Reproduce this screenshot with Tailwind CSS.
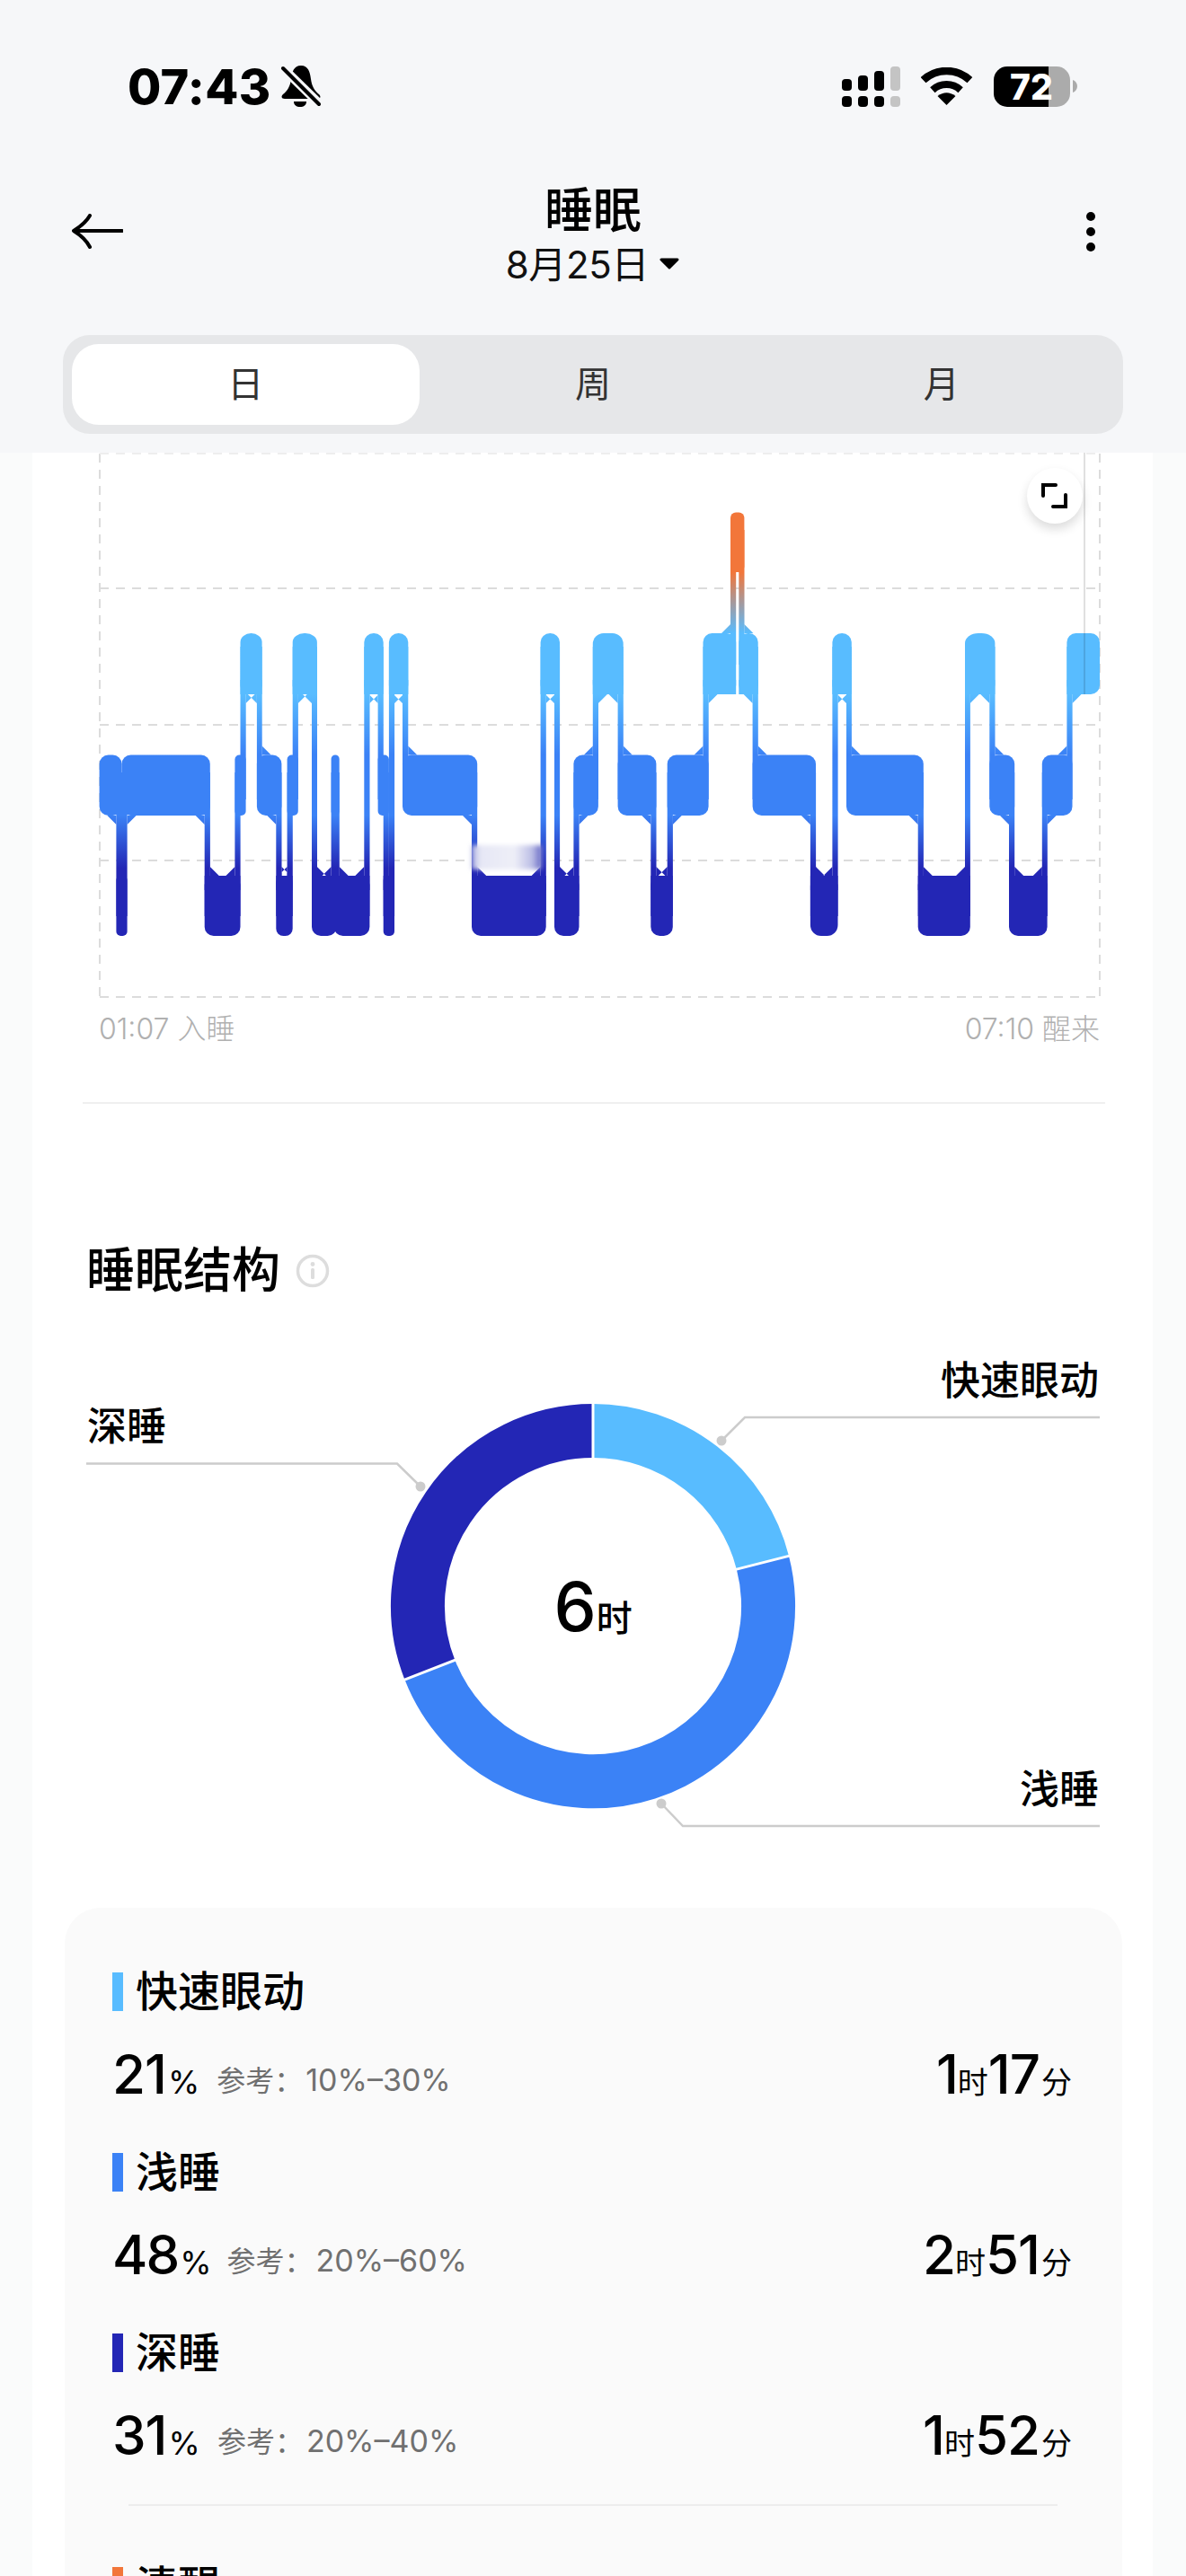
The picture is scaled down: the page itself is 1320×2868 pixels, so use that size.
<!DOCTYPE html>
<html lang="zh-CN">
<head>
<meta charset="utf-8">
<title>睡眠</title>
<script src="https://cdn.jsdelivr.net/npm/@tailwindcss/browser@4"></script>
</head>
<body class="w-[1320px] h-[2868px] overflow-hidden bg-[#fafbfb] text-black [font-family:Inter,'Noto_Sans_CJK_SC',sans-serif]">

<header class="h-[504px] bg-[#f6f7f9]">
  <div class="flex justify-between items-center h-[47px] pt-[73px] box-content pl-[142px] pr-[120px]">
    <div class="flex items-center gap-[12px]">
      <span class="text-[54px] leading-[47px] font-extrabold tracking-[0.3px]">07:43</span>
      <svg class="w-[44px] h-[47px]" viewBox="313 75 44 47">
        <path d="M335 75C327 75 325 82 324 90C323 98 320 103 315 107C312 110 314 112 317 112H353C356 112 358 110 355 107C350 103 347 98 346 90C345 82 343 75 335 75Z" fill="#000"/>
        <path d="M327 115H341C341 119 338 121 334 121C330 121 327 119 327 115Z" fill="#000"/>
        <path d="M313 76L358 120" stroke="#f6f7f9" stroke-width="10"/>
        <path d="M315 78L355 118" stroke="#000" stroke-width="4" stroke-linecap="round"/>
      </svg>
    </div>
    <div class="flex items-center gap-[23px]">
      <svg class="w-[65px] h-[45px]" viewBox="937 74 65 45">
        <rect x="937" y="88" width="11" height="13" rx="4"/><rect x="955" y="84" width="11" height="17" rx="4"/><rect x="973" y="79" width="11" height="22" rx="4"/><rect x="991" y="74" width="11" height="27" rx="4" fill="#c4c4c4"/>
        <rect x="937" y="107" width="11" height="12" rx="4"/><rect x="955" y="107" width="11" height="12" rx="4"/><rect x="973" y="107" width="11" height="12" rx="4"/><rect x="991" y="107" width="11" height="12" rx="4" fill="#c4c4c4"/>
      </svg>
      <svg class="w-[58px] h-[43px]" viewBox="1025 75 58 43">
        <path d="M1027.6 89.2A38 38 0 0 1 1079.4 89.2" fill="none" stroke="#000" stroke-width="8.5"/>
        <path d="M1037.9 100.2A23 23 0 0 1 1069.1 100.2" fill="none" stroke="#000" stroke-width="8"/>
        <path d="M1053.5 117L1043.5 107Q1053.5 99.5 1063.5 107Z" fill="#000"/>
      </svg>
      <svg class="w-[94px] h-[45px]" viewBox="1105 74 94 45">
        <path d="M1166 74H1120A15 15 0 0 0 1105 89V104A15 15 0 0 0 1120 119H1166Z" fill="#000"/>
        <path d="M1166 74H1175A15 15 0 0 1 1190 89V104A15 15 0 0 1 1175 119H1166Z" fill="#ababab"/>
        <path d="M1193 89C1196 90 1198 93 1198 96C1198 99 1196 102 1193 103Z" fill="#ababab"/>
        <text x="1147" y="111" text-anchor="middle" fill="#fff" font-size="39" font-weight="800">72</text>
      </svg>
    </div>
  </div>

  <div class="grid grid-cols-[57px_1fr_57px] items-center mt-[87px] px-[103px] h-[113px]">
    <svg class="w-[57px] h-[39px] mt-[-12px] ml-[-23px]" viewBox="80 238 57 39">
      <path d="M136 257H83M100 240C96 247 90 252 82 257C90 262 96 267 100 275" fill="none" stroke="#000" stroke-width="4" stroke-linecap="round" stroke-linejoin="round"/>
    </svg>
    <div class="flex flex-col items-center mt-[-2px]">
      <div class="text-[54px] leading-[58px] font-medium">睡眠</div>
      <div class="flex items-center gap-[11px] mt-[6px]">
        <span class="text-[42px] leading-[50px] text-[#111] tracking-[-0.3px]">8月25日</span>
        <svg class="w-[24px] h-[13px] mt-[-2px]" viewBox="0 0 24 13"><path d="M3 2H21L12 11Z" fill="#000" stroke="#000" stroke-width="3" stroke-linejoin="round"/></svg>
      </div>
    </div>
    <div class="flex flex-col gap-[7px] mt-[-12px] justify-self-end mr-[-2px]">
      <span class="w-[10px] h-[10px] rounded-full bg-black"></span>
      <span class="w-[10px] h-[10px] rounded-full bg-black"></span>
      <span class="w-[10px] h-[10px] rounded-full bg-black"></span>
    </div>
  </div>

  <div class="grid grid-cols-3 ml-[70px] mt-[53px] w-[1180px] h-[110px] p-[10px] rounded-[30px] bg-[#e6e7e9]">
    <div class="flex items-center justify-center rounded-[30px] bg-white text-[40px] text-[#333]">日</div>
    <div class="flex items-center justify-center text-[40px] text-[#333]">周</div>
    <div class="flex items-center justify-center text-[40px] text-[#333] pl-[2px]">月</div>
  </div>
</header>

<main class="ml-[36px] w-[1247px] h-[2364px] bg-white overflow-hidden">
  <div class="relative h-[621px]">
    <svg class="block w-[1247px] h-[621px]" viewBox="36 504 1247 621">
      <defs>
        <linearGradient id="g" gradientUnits="userSpaceOnUse" x1="0" y1="570" x2="0" y2="1042">
          <stop offset="0" stop-color="#f2763a"/>
          <stop offset="0.142" stop-color="#f2763a"/>
          <stop offset="0.286" stop-color="#58bcff"/>
          <stop offset="0.43" stop-color="#58bcff"/>
          <stop offset="0.572" stop-color="#3b82f6"/>
          <stop offset="0.716" stop-color="#3b82f6"/>
          <stop offset="0.84" stop-color="#2326b5"/>
          <stop offset="1" stop-color="#2326b5"/>
        </linearGradient>
        <linearGradient id="h" gradientUnits="userSpaceOnUse" x1="525" y1="0" x2="604" y2="0">
          <stop offset="0" stop-color="#a9acdf"/>
          <stop offset="0.12" stop-color="#e6e7f5"/>
          <stop offset="0.6" stop-color="#eeeff8"/>
          <stop offset="0.85" stop-color="#bcbee6"/>
          <stop offset="1" stop-color="#5a5ec2"/>
        </linearGradient>
        <filter id="b" x="-10%" y="-30%" width="120%" height="160%"><feGaussianBlur stdDeviation="2.5"/></filter>
      </defs>
      <g stroke="#dcdcdc" stroke-width="2" stroke-dasharray="10 8" fill="none">
        <path d="M111 655H1224M111 807H1224M111 958H1224M111 1110H1224"/>
        <path d="M111 505V1110M1224 505V1110"/>
        <path d="M111 505H1224" stroke="#eeeeee"/>
      </g>
      <g fill="url(#g)">
        <rect x="110.6" y="840.5" width="24.9" height="67.5" rx="10" ry="10"/>
        <rect x="129.4" y="975" width="12.2" height="67" rx="5"/>
        <rect x="135.5" y="840.5" width="98.3" height="67.5" rx="10"/>
        <rect x="227.7" y="975" width="39.8" height="67" rx="10"/>
        <rect x="261.4" y="840.5" width="12.2" height="67.5" rx="5"/>
        <rect x="267.5" y="705" width="24.1" height="68" rx="12" ry="10"/>
        <rect x="285.9" y="840.5" width="27.5" height="67.5" rx="10"/>
        <rect x="307.3" y="975" width="18.4" height="67" rx="8"/>
        <rect x="319.6" y="840.5" width="12.2" height="67.5" rx="5"/>
        <rect x="325.7" y="705" width="27.2" height="68" rx="13" ry="10"/>
        <rect x="347" y="975" width="27.7" height="67" rx="10"/>
        <rect x="368.6" y="840.5" width="9.1" height="67.5" rx="4.5"/>
        <rect x="371.6" y="975" width="39.8" height="67" rx="10"/>
        <rect x="405.3" y="705" width="21.4" height="68" rx="10.5" ry="10"/>
        <rect x="420.6" y="840.5" width="12.3" height="67.5" rx="5"/>
        <rect x="426.7" y="975" width="12.3" height="67" rx="5"/>
        <rect x="432.9" y="705" width="21.4" height="68" rx="10.5" ry="10"/>
        <rect x="448" y="840.5" width="83.2" height="67.5" rx="10"/>
        <rect x="525" y="975" width="82.7" height="67" rx="10"/>
        <rect x="601.6" y="705" width="21.4" height="68" rx="10.5" ry="10"/>
        <rect x="617" y="975" width="27.5" height="67" rx="10"/>
        <rect x="638.4" y="840.5" width="27.5" height="67.5" rx="10"/>
        <rect x="659.8" y="705" width="33.9" height="68" rx="12"/>
        <rect x="687.6" y="840.5" width="42.8" height="67.5" rx="10"/>
        <rect x="724.3" y="975" width="24.5" height="67" rx="10"/>
        <rect x="742.7" y="840.5" width="45.9" height="67.5" rx="10"/>
        <rect x="782.5" y="705" width="36.7" height="68" rx="10"/>
        <rect x="813" y="570.5" width="15.4" height="66.5" rx="6"/>
        <rect x="822.3" y="705" width="21.4" height="68" rx="10"/>
        <rect x="837.6" y="840.5" width="70.4" height="67.5" rx="10"/>
        <rect x="901.9" y="975" width="30.6" height="67" rx="12"/>
        <rect x="926.4" y="705" width="21.4" height="68" rx="10.5" ry="10"/>
        <rect x="942" y="840.5" width="85.8" height="67.5" rx="10"/>
        <rect x="1021.7" y="975" width="58.1" height="67" rx="10"/>
        <rect x="1074" y="705" width="33.4" height="68" rx="15" ry="11"/>
        <rect x="1101.3" y="840.5" width="27.9" height="67.5" rx="10"/>
        <rect x="1123" y="975" width="42.6" height="67" rx="10"/>
        <rect x="1159.8" y="840.5" width="33.7" height="67.5" rx="10"/>
        <rect x="1187.4" y="705" width="36.6" height="68" rx="10"/>
        <path d="M267.5 757h24.1v16h-24.1zM325.7 757h27.2v16h-27.2zM405.3 757h21.4v16h-21.4zM432.9 757h21.4v16h-21.4zM601.6 757h21.4v16h-21.4zM659.8 757h33.9v16h-33.9zM782.5 757h36.7v16h-36.7zM822.3 757h21.4v16h-21.4zM926.4 757h21.4v16h-21.4zM1074 757h33.4v16h-33.4zM1187.4 757h12v16h-12z"/>
        <path d="M227.7 975h39.8v16h-39.8zM307.3 975h18.4v16h-18.4zM347 975h27.7v16h-27.7zM371.6 975h39.8v16h-39.8zM426.7 975h12.3v16h-12.3zM525 975h82.7v16h-82.7zM617 975h27.5v16h-27.5zM724.3 975h24.5v16h-24.5zM901.9 975h30.6v16h-30.6zM1021.7 975h58.1v16h-58.1zM1123 975h42.6v16h-42.6z"/>
        <path d="M129.4 860h6.2v160h-6.2zM135.5 860h6.1v160h-6.1zM227.7 860h6.2v160h-6.2zM261.4 860h6.2v160h-6.2zM307.3 860h6.2v160h-6.2zM319.6 860h6.2v160h-6.2zM368.6 860h6.2v160h-6.2zM371.6 860h6.2v160h-6.2zM426.7 860h6.2v160h-6.2zM525 860h6.2v160h-6.2zM638.4 860h6.2v160h-6.2zM724.3 860h6.2v160h-6.2zM742.7 860h6.2v160h-6.2zM901.9 860h6.2v160h-6.2zM1021.7 860h6.2v160h-6.2zM1123 860h6.2v160h-6.2zM1159.8 860h6v160h-6z"/>
        <path d="M267.5 720h6.2v170h-6.2zM285.9 720h5.8v170h-5.8zM325.7 720h6.2v170h-6.2zM420.6 720h6.2v170h-6.2zM448 720h6.3v170h-6.3zM659.8 720h6.2v170h-6.2zM687.6 720h6.2v170h-6.2zM782.5 720h6.2v170h-6.2zM837.6 720h6.2v170h-6.2zM942 720h5.9v170h-5.9zM1101.3 720h6.2v170h-6.2zM1187.4 720h6.2v170h-6.2z"/>
        <path d="M347 720h6v300h-6zM405.3 720h6.2v300h-6.2zM432.9 720h6.2v300h-6.2zM601.6 720h6.2v300h-6.2zM617 720h6.1v300h-6.1zM926.4 720h6.2v300h-6.2zM1074 720h5.9v300h-5.9z"/>
        <path d="M813 590h6.2v150h-6.2zM822.3 590h6.2v150h-6.2z"/>
        <path d="M129.4 908h-10l10 10zM141.6 908h10l-10 10zM227.7 908h-10l10 10zM233.8 975h10l-10-10zM261.4 975h-10l10-10zM273.6 773h10l-10 10zM285.9 773h-10l10 10zM291.6 840.5h10l-10-10zM307.3 908h-10l10 10zM313.4 975h10l-10-10zM319.6 975h-10l10-10zM331.8 773h10l-10 10zM347 773h-10l10 10zM352.9 975h10l-10-10zM368.6 975h-10l10-10zM377.7 975h10l-10-10zM405.3 975h-10l10-10zM411.4 773h10l-10 10zM420.6 773h-10l10 10zM439 773h10l-10 10zM448 773h-10l10 10zM454.3 840.5h10l-10-10z"/>
        <path d="M525 908h-10l10 10zM531.2 975h10l-10-10zM601.6 975h-10l10-10zM607.7 773h10l-10 10zM617 773h-10l10 10zM623 975h10l-10-10zM638.4 975h-10l10-10zM644.5 908h10l-10 10zM659.8 840.5h-10l10-10zM665.9 773h10l-10 10zM687.6 773h-10l10 10zM693.7 840.5h10l-10-10zM724.3 908h-10l10 10zM730.4 975h10l-10-10zM742.7 975h-10l10-10zM748.8 908h10l-10 10zM782.5 840.5h-10l10-10zM788.6 773h10l-10 10zM813 705h-10l10-10zM828.4 705h10l-10-10zM837.6 773h-10l10 10zM843.7 840.5h10l-10-10z"/>
        <path d="M901.9 908h-10l10 10zM908 975h10l-10-10zM926.4 975h-10l10-10zM932.5 773h10l-10 10zM942 773h-10l10 10zM947.8 840.5h10l-10-10zM1021.7 908h-10l10 10zM1027.8 975h10l-10-10zM1074 975h-10l10-10zM1079.8 773h10l-10 10zM1101.3 773h-10l10 10zM1107.4 840.5h10l-10-10zM1123 908h-10l10 10zM1129.2 975h10l-10-10zM1159.8 975h-10l10-10zM1165.6 908h10l-10 10zM1187.4 840.5h-10l10-10zM1193.5 773h10l-10 10z"/>
      </g>
      <rect x="525" y="941" width="79" height="27" fill="url(#h)" filter="url(#b)"/>
      <rect x="1206" y="504" width="2" height="269" fill="#000" fill-opacity="0.12"/>
    </svg>
    <button class="absolute left-[1107px] top-[17px] w-[62px] h-[62px] rounded-full bg-white shadow-[0_6px_12px_rgba(0,0,0,0.14)] flex items-center justify-center">
      <svg class="w-[30px] h-[30px]" viewBox="1160 538 30 30"><path d="M1162 553V541H1176M1187 552V565H1173" fill="none" stroke="#000" stroke-width="4" stroke-linecap="round"/></svg>
    </button>
  </div>

  <div class="flex justify-between ml-[74px] mr-[59px] h-[42px] items-center text-[32px] font-light text-[#b0b0b0]">
    <span>01:07 入睡</span>
    <span>07:10 醒来</span>
  </div>
  <div class="ml-[56px] mr-[53px] mt-[60px] h-[2px] bg-[#efefef]"></div>

  <div class="flex items-center ml-[60px] mt-[156px] h-[60px] gap-[17px]">
    <h2 class="text-[54px] leading-[60px] font-medium">睡眠结构</h2>
    <svg class="w-[38px] h-[38px]" viewBox="0 0 38 38"><circle cx="19" cy="19" r="16.5" fill="none" stroke="#dddddd" stroke-width="3.5"/><circle cx="19" cy="11.5" r="2.4" fill="#dddddd"/><rect x="17" y="16" width="4" height="12" rx="1.5" fill="#dddddd"/></svg>
  </div>

  <div class="relative h-[682px] mt-[-3px]">
    <svg class="block w-[1247px] h-[682px]" viewBox="36 1443 1247 682">
      <g fill="none" stroke-width="60">
        <path d="M660 1594A195 195 0 0 1 848.9 1740.7" stroke="#58bcff"/>
        <path d="M848.9 1740.7A195 195 0 0 1 478.4 1860.2" stroke="#3b82f6"/>
        <path d="M478.4 1860.2A195 195 0 0 1 660 1594" stroke="#2326b5"/>
      </g>
      <path d="M660 1559V1629M815 1749.4L882.8 1732.1M511 1847.4L445.8 1872.9" stroke="#fff" stroke-width="3" fill="none"/>
      <g fill="none" stroke="#cccccc" stroke-width="2.5">
        <path d="M1224 1579H829L803 1605"/>
        <path d="M96 1630.5H442L468 1656"/>
        <path d="M1224 2034H760L736 2009"/>
      </g>
      <g fill="#cccccc"><circle cx="803" cy="1605" r="5.5"/><circle cx="468" cy="1656" r="5.5"/><circle cx="736" cy="2009" r="5.5"/></g>
    </svg>
    <span class="absolute right-[60px] top-[65px] text-[44px] leading-[60px] font-medium">快速眼动</span>
    <span class="absolute left-[61px] top-[116px] text-[44px] leading-[60px] font-medium">深睡</span>
    <span class="absolute right-[60px] top-[520px] text-[44px] leading-[60px] font-medium">浅睡</span>
    <div class="absolute left-[514px] top-[302px] w-[220px] flex justify-center items-baseline">
      <span class="text-[75px] leading-[90px] font-medium">6</span><span class="text-[40px] leading-[90px] font-medium">时</span>
    </div>
  </div>

  <section class="ml-[36px] w-[1177px] h-[800px] pt-[69px] pl-[53px] pr-[56px] rounded-[40px] bg-[#fafafa]">
    <div class="flex items-center h-[48px] gap-[14px]"><i class="w-[12px] h-[43px] bg-[#58bcff]"></i><span class="text-[47px] leading-[48px] font-medium">快速眼动</span></div>
    <div class="flex justify-between items-baseline mt-[32px] h-[72px] mb-[49px] leading-[72px]">
      <div class="flex items-baseline"><span class="text-[60px] font-medium tracking-[-1px]">21</span><span class="text-[36px] ml-[2px]">%</span><span class="text-[32px] text-[#707070] ml-[19px] -translate-y-[3px]">参考：</span><span class="text-[34px] text-[#707070] ml-[3px] -translate-y-[3px]">10%–30%</span></div>
      <div class="flex items-baseline"><span class="text-[60px] font-medium tracking-[-1px]">1</span><span class="text-[34px]">时</span><span class="text-[60px] font-medium tracking-[-1px]">17</span><span class="text-[34px] ml-[2px]">分</span></div>
    </div>
    <div class="flex items-center h-[48px] gap-[14px]"><i class="w-[12px] h-[43px] bg-[#3b82f6]"></i><span class="text-[47px] leading-[48px] font-medium">浅睡</span></div>
    <div class="flex justify-between items-baseline mt-[32px] h-[72px] mb-[49px] leading-[72px]">
      <div class="flex items-baseline"><span class="text-[60px] font-medium tracking-[-2px]">48</span><span class="text-[36px] ml-[2px]">%</span><span class="text-[32px] text-[#707070] ml-[17px] -translate-y-[3px]">参考：</span><span class="text-[34px] text-[#707070] ml-[3px] -translate-y-[3px]">20%–60%</span></div>
      <div class="flex items-baseline"><span class="text-[60px] font-medium tracking-[-1px]">2</span><span class="text-[34px]">时</span><span class="text-[60px] font-medium tracking-[-1px]">51</span><span class="text-[34px] ml-[2px]">分</span></div>
    </div>
    <div class="flex items-center h-[48px] gap-[14px]"><i class="w-[12px] h-[43px] bg-[#2326b5]"></i><span class="text-[47px] leading-[48px] font-medium">深睡</span></div>
    <div class="flex justify-between items-baseline mt-[32px] h-[72px] leading-[72px]">
      <div class="flex items-baseline"><span class="text-[60px] font-medium tracking-[-1px]">31</span><span class="text-[36px] ml-[2px]">%</span><span class="text-[32px] text-[#707070] ml-[19px] -translate-y-[3px]">参考：</span><span class="text-[34px] text-[#707070] ml-[3px] -translate-y-[3px]">20%–40%</span></div>
      <div class="flex items-baseline"><span class="text-[60px] font-medium tracking-[-1px]">1</span><span class="text-[34px]">时</span><span class="text-[60px] font-medium tracking-[-1px]">52</span><span class="text-[34px] ml-[2px]">分</span></div>
    </div>
    <div class="ml-[18px] mr-[16px] mt-[41px] h-[2px] bg-[#ececec]"></div>
    <div class="flex items-center h-[48px] gap-[14px] mt-[65px]"><i class="w-[12px] h-[43px] bg-[#f2763a]"></i><span class="text-[47px] leading-[48px] font-medium">清醒</span></div>
  </section>
</main>
</body>
</html>
